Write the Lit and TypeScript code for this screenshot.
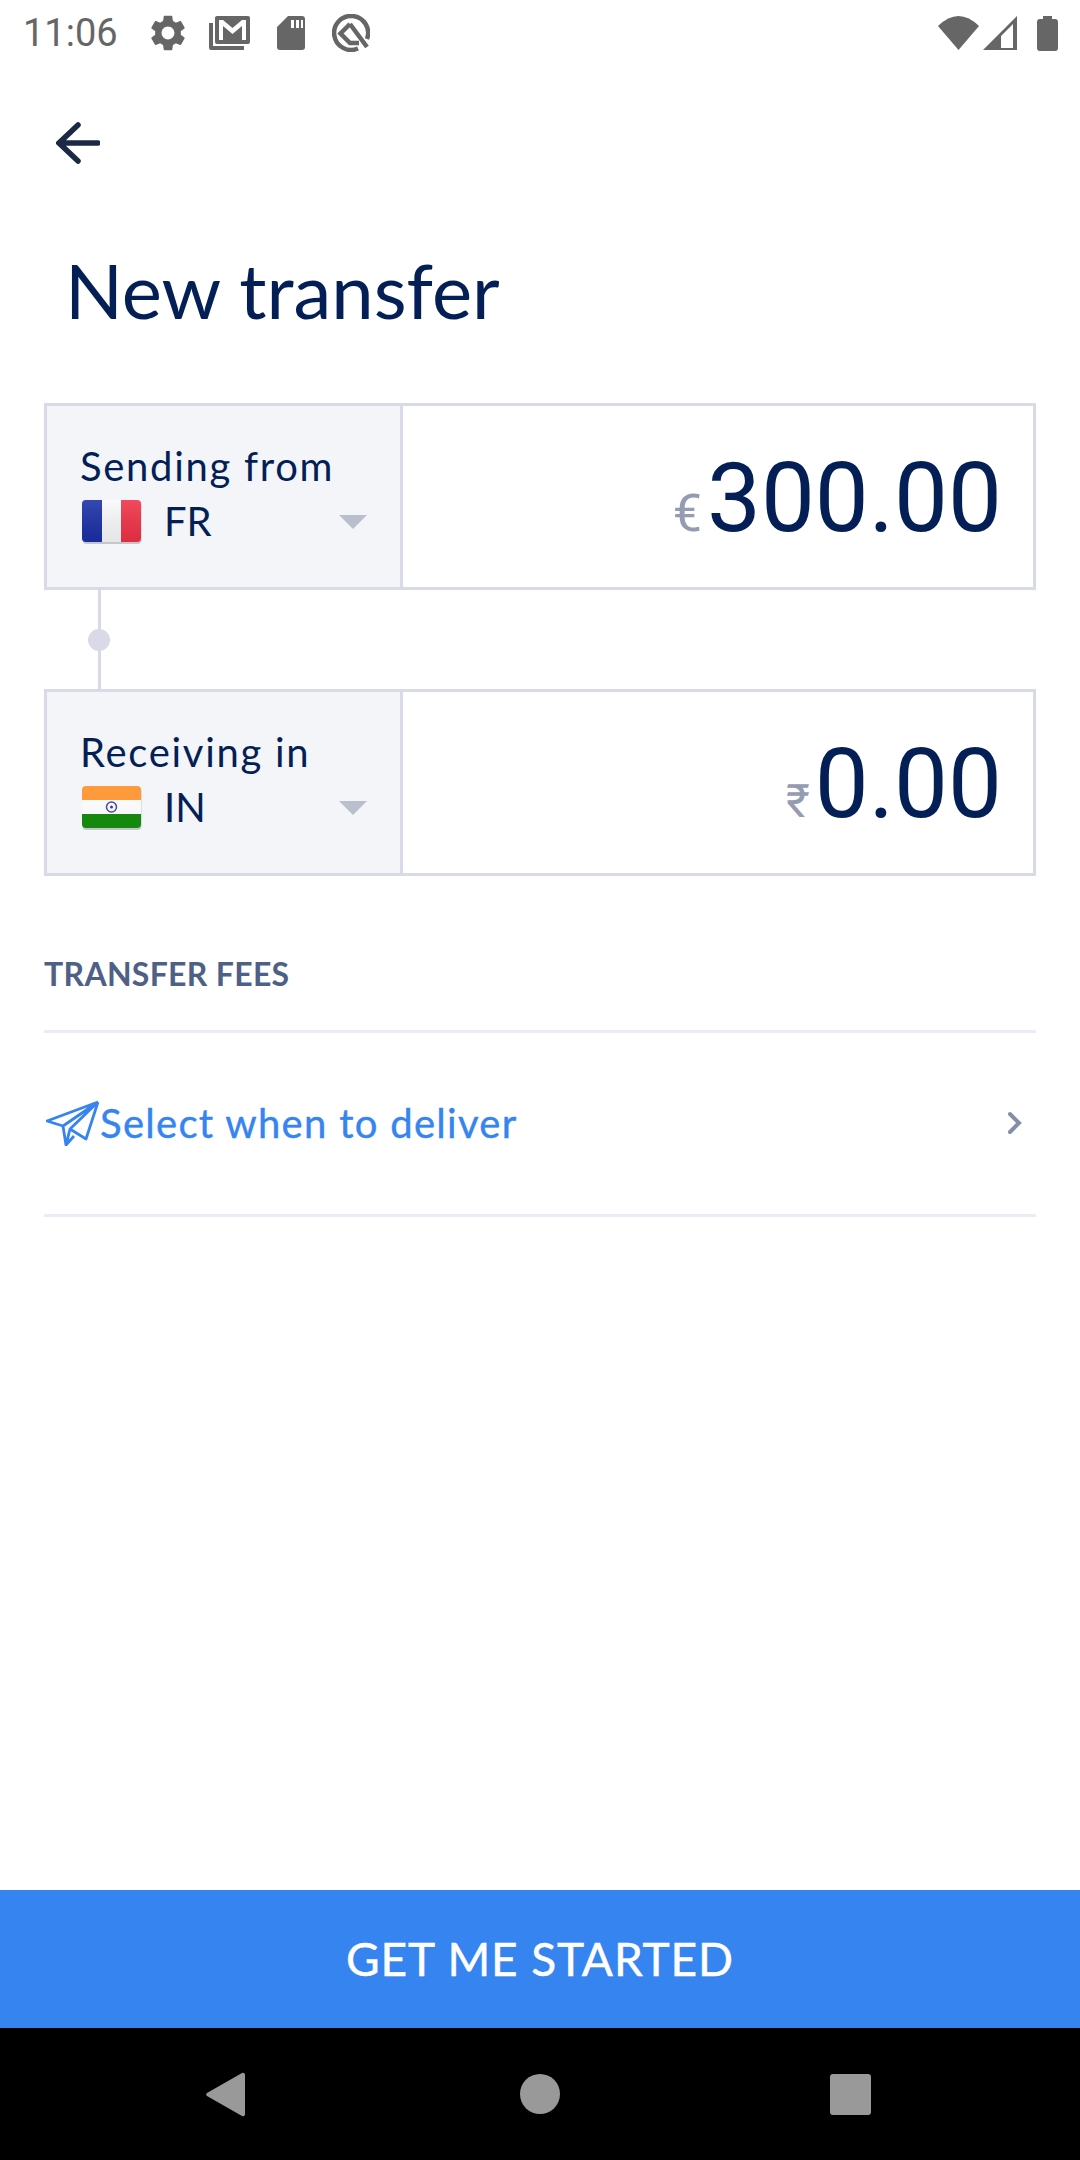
import { LitElement, html, css, svg } from 'lit';
import { customElement } from 'lit/decorators.js';

const gear = svg`<path d="M19.14 12.94c.04-.3.06-.61.06-.94 0-.32-.02-.64-.07-.94l2.03-1.58a.49.49 0 0 0 .12-.61l-1.92-3.32a.488.488 0 0 0-.59-.22l-2.39.96c-.5-.38-1.03-.7-1.62-.94l-.36-2.54a.484.484 0 0 0-.48-.41h-3.84c-.24 0-.43.17-.47.41l-.36 2.54c-.59.24-1.13.57-1.62.94l-2.39-.96c-.22-.08-.47 0-.59.22L2.74 8.87c-.12.21-.08.47.12.61l2.03 1.58c-.05.3-.09.63-.09.94s.02.64.07.94l-2.03 1.58a.49.49 0 0 0-.12.61l1.92 3.32c.12.22.37.29.59.22l2.39-.96c.5.38 1.03.7 1.62.94l.36 2.54c.05.24.24.41.48.41h3.84c.24 0 .44-.17.47-.41l.36-2.54c.59-.24 1.13-.56 1.62-.94l2.39.96c.22.08.47 0 .59-.22l1.92-3.32c.12-.22.07-.47-.12-.61l-2.01-1.58zM12 15.6c-1.98 0-3.6-1.62-3.6-3.6s1.62-3.6 3.6-3.6 3.6 1.62 3.6 3.6-1.62 3.6-3.6 3.6z"/>`;

@customElement('app-root')
export class AppRoot extends LitElement {
  static styles = css`
    :host {
      display: flex;
      flex-direction: column;
      width: 1080px;
      height: 2160px;
      background: #fff;
      font-family: Lato, sans-serif;
      color: #031f55;
    }

    .status {
      display: flex;
      align-items: center;
      height: 66px;
      padding: 0 22px 0 23px;
      box-sizing: border-box;
      color: #666;
      font: 38px Roboto, sans-serif;
    }
    .status svg { display: block; fill: #666; }
    .status svg.q { fill: none; stroke: #666; stroke-width: 4.500; }
    .time { width: 128px; }
    .gear { margin-right: 24px; }
    .gmail { margin-right: 27px; }
    .sd { margin-right: 27px; }
    .status .grow { flex: 1; }
    .signal { margin: 0 20px 0 4px; }

    .back { display: block; margin: 56px 0 0 56px; }

    h1 {
      margin: 81px 0 68px 65px;
      font-size: 76px;
      line-height: 90px;
      font-weight: 400;
    }

    main { padding: 0 44px; }

    .box {
      display: flex;
      height: 187px;
      box-sizing: border-box;
      border: 3px solid #d8dae8;
    }
    .picker {
      width: 356px;
      box-sizing: border-box;
      padding: 33px 0 0 33px;
      background: #f3f5f9;
      border-right: 3px solid #d8dae8;
    }
    .picker .label { font-size: 40px; line-height: 54px; letter-spacing: 1.700px; }
    .country { display: flex; align-items: center; height: 56px; font-size: 40px; }
    .flag { display: block; width: 60px; height: 44px; margin: 2px 22px 0 2px; }
    .caret {
      width: 0;
      height: 0;
      margin: 2px 33px 0 auto;
      border-left: 14px solid transparent;
      border-right: 14px solid transparent;
      border-top: 14px solid #b9bfcd;
    }
    .amount {
      flex: 1;
      display: flex;
      align-items: baseline;
      justify-content: flex-end;
      padding: 27px 31px 0 0;
      font: 96px/130px Roboto, sans-serif;
    }
    .symbol { font-size: 46px; color: #959bb2; margin-right: 5px; }
    .symbol.eur { font-size: 52px; }

    .link {
      position: relative;
      width: 3px;
      height: 99px;
      margin-left: 54px;
      background: #d8dae8;
    }
    .link::after {
      content: '';
      position: absolute;
      left: -10px;
      top: 39px;
      width: 22px;
      height: 22px;
      border-radius: 50%;
      background: #d8dae8;
    }

    h2 {
      margin: 78px 0 36px;
      font-size: 32px;
      line-height: 40px;
      font-weight: 700;
      letter-spacing: 0.300px;
      color: #4f6086;
    }
    .deliver {
      display: flex;
      align-items: center;
      height: 187px;
      box-sizing: border-box;
      padding: 0 0 2px 2px;
      border-top: 3px solid #e9ecf4;
      border-bottom: 3px solid #e9ecf4;
      color: #3584f0;
      font-size: 40px;
      letter-spacing: 1.300px;
      -webkit-text-stroke: 0.400px #3584f0;
    }
    .deliver .chev { margin-left: auto; margin-right: 14px; }

    .spacer { flex: 1; }

    .cta {
      height: 138px;
      box-sizing: border-box;
      padding-bottom: 2px;
      display: flex;
      align-items: center;
      justify-content: center;
      background: #3584ef;
      color: #fff;
      font-size: 46px;
      letter-spacing: 0.900px;
      -webkit-text-stroke: 0.500px #fff;
    }

    nav {
      display: flex;
      align-items: center;
      height: 132px;
      padding-left: 206px;
      background: #000;
    }
    nav svg { display: block; fill: #999; }
    .nav-back { margin-right: 275px; }
    .nav-home { margin-right: 270px; }
  `;

  render() {
    return html`
      <div class="status">
        <span class="time">11:06</span>
        <svg class="gear" width="34" height="36" viewBox="2.5 2 19 20">${gear}</svg>
        <svg class="gmail" width="41" height="34" viewBox="0 0 41 34">
          <path d="M0 7h4v23h31v4H2a2 2 0 0 1-2-2z"/>
          <rect x="6" y="0" width="35" height="28" rx="2"/>
          <path fill="#fff" d="M10 4h4l9.500 8L33 4h4v20h-4V10l-9.500 8L14 10v14h-4z"/>
        </svg>
        <svg class="sd" width="28" height="34" viewBox="0 0 28 34">
          <path fill-rule="evenodd" d="M11 0h14a3 3 0 0 1 3 3v28a3 3 0 0 1-3 3H3a3 3 0 0 1-3-3V11zM14 4v8h3V4zM19 4v8h3V4zM24 4v8h2V4z"/>
        </svg>
        <svg class="q" width="38" height="38" viewBox="0 0 38 38">
          <path d="M26 34.500A17 17 0 1 1 35 25"/>
          <path d="M18 10L8.500 19.500 18 29H27M18 10L35 33"/>
        </svg>
        <span class="grow"></span>
        <svg width="41" height="34" viewBox="0 0 41 34"><path d="M0 10Q20.500-10 41 10L20.500 34z"/></svg>
        <svg class="signal" width="34" height="34" viewBox="0 0 34 34">
          <path fill-rule="evenodd" d="M34 0v34H0zM30 8L18 20v12h12z"/>
        </svg>
        <svg width="21" height="35" viewBox="0 0 21 35">
          <path d="M6 0h9v3h3a3 3 0 0 1 3 3v26a3 3 0 0 1-3 3H3a3 3 0 0 1-3-3V6a3 3 0 0 1 3-3h3z"/>
        </svg>
      </div>

      <svg class="back" width="44" height="42" viewBox="0 0 44 42" fill="none" stroke="#1a2a44" stroke-width="5.500" stroke-linecap="round">
        <path d="M42 21H3M22 3L3 21l19 18"/>
      </svg>

      <h1>New transfer</h1>

      <main>
        <div class="box">
          <div class="picker">
            <div class="label">Sending from</div>
            <div class="country">
              <svg class="flag" viewBox="0 0 60 44">
                <defs>
                  <clipPath id="fr"><rect width="59" height="42" rx="4"/></clipPath>
                  <linearGradient id="sheen-fr" x1="0" y1="0" x2="0" y2="1">
                    <stop offset="0" stop-color="#fff" stop-opacity=".12"/>
                    <stop offset="1" stop-color="#000" stop-opacity=".08"/>
                  </linearGradient>
                </defs>
                <rect x=".5" y="1" width="59" height="43" rx="4" fill="#c4c6cc"/>
                <g clip-path="url(#fr)">
                  <rect width="20" height="42" fill="#1b2fa6"/>
                  <rect x="20" width="19" height="42" fill="#fafafc"/>
                  <rect x="39" width="20" height="42" fill="#f03247"/>
                  <rect width="59" height="42" fill="url(#sheen-fr)"/>
                </g>
              </svg>
              <span>FR</span>
              <span class="caret"></span>
            </div>
          </div>
          <div class="amount"><span class="symbol eur">€</span>300.00</div>
        </div>

        <div class="link"></div>

        <div class="box">
          <div class="picker">
            <div class="label">Receiving in</div>
            <div class="country">
              <svg class="flag" viewBox="0 0 60 44">
                <defs>
                  <clipPath id="in"><rect width="59" height="42" rx="4"/></clipPath>
                </defs>
                <rect x=".5" y="1" width="59" height="43" rx="4" fill="#c4c6cc"/>
                <g clip-path="url(#in)">
                  <rect width="59" height="14" fill="#ff9a3c"/>
                  <rect y="14" width="59" height="14" fill="#f9f9f9"/>
                  <rect y="28" width="59" height="14" fill="#17880f"/>
                </g>
                <circle cx="29.500" cy="21" r="5" fill="none" stroke="#4a4aa8" stroke-width="1.500"/>
                <circle cx="29.500" cy="21" r="1.500" fill="#3c3c9c"/>
              </svg>
              <span>IN</span>
              <span class="caret"></span>
            </div>
          </div>
          <div class="amount"><span class="symbol">₹</span>0.00</div>
        </div>

        <h2>TRANSFER FEES</h2>

        <div class="deliver">
          <svg width="54" height="46" viewBox="0 0 54 46" fill="none" stroke="#3584f0" stroke-width="2.800" stroke-linejoin="round">
            <path d="M52 2L1 21l16 5 3 19 8-9M52 2L40 39 24 29l-4 16M52 2L17 26M52 2L24 29"/>
          </svg>
          <span>Select when to deliver</span>
          <svg class="chev" width="14" height="24" viewBox="0 0 14 24" fill="none" stroke="#868da8" stroke-width="4" stroke-linecap="round">
            <path d="M2 3l9 9-9 9"/>
          </svg>
        </div>
      </main>

      <div class="spacer"></div>

      <div class="cta">GET ME STARTED</div>

      <nav>
        <svg class="nav-back" width="39" height="45" viewBox="0 0 39 45"><path d="M36 1a2 2 0 0 1 3 1.500v40a2 2 0 0 1-3 1.500L1 24a2 2 0 0 1 0-3z"/></svg>
        <svg class="nav-home" width="40" height="40" viewBox="0 0 40 40"><circle cx="20" cy="20" r="20"/></svg>
        <svg width="41" height="41" viewBox="0 0 41 41"><rect width="41" height="41" rx="3"/></svg>
      </nav>
    `;
  }
}
